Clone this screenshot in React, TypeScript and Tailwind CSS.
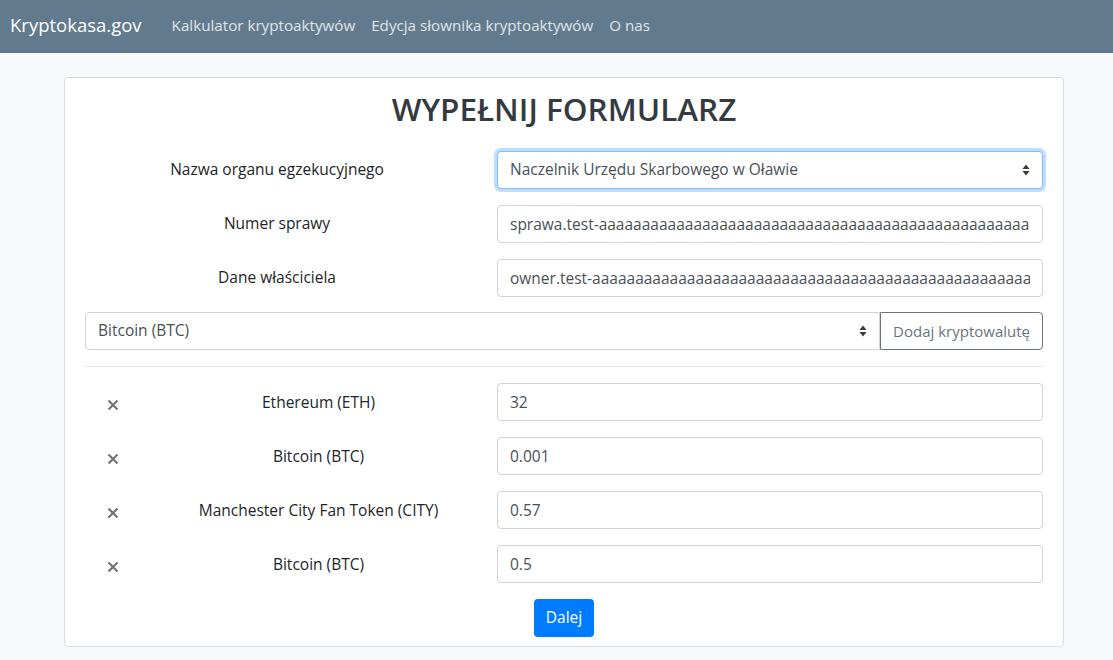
import { ReactNode } from "react";

const font = { fontFamily: '"Open Sans", "Noto Sans", sans-serif' };

function SelectArrows() {
  return (
    <svg viewBox="0 0 8 12" className="h-[12px] w-[8px] fill-[#343a40]">
      <path d="M4 0.5 L7.5 5 H0.5 Z" />
      <path d="M4 11.5 L7.5 7 H0.5 Z" />
    </svg>
  );
}

function RemoveIcon() {
  return (
    <svg viewBox="0 0 12 12" className="size-[12px] stroke-[#757575]" strokeWidth="2.2">
      <path d="M1.5 1.5 L10.5 10.5 M10.5 1.5 L1.5 10.5" />
    </svg>
  );
}

function Field({ label, children }: { label: string; children: ReactNode }) {
  return (
    <div className="flex items-center">
      <label className="w-[412px] pr-[28px] text-center text-[15.5px] text-[#212529]">
        {label}
      </label>
      <div className="flex-1">{children}</div>
    </div>
  );
}

const inputCls =
  "h-[38px] w-full rounded-[4px] border border-[#ced4da] bg-white px-[12px] text-[15.5px] text-[#495057] outline-none";

const items = [
  { name: "Ethereum (ETH)", value: "32" },
  { name: "Bitcoin (BTC)", value: "0.001" },
  { name: "Manchester City Fan Token (CITY)", value: "0.57" },
  { name: "Bitcoin (BTC)", value: "0.5" },
];

export default function App() {
  return (
    <div className="min-h-[660px] bg-[#f8f9fa]" style={font}>
      <nav className="flex h-[53px] items-center bg-[#617a8d] pb-[3px] pl-[10px]">
        <span className="mr-[30px] text-[18.5px] text-white">Kryptokasa.gov</span>
        <ul className="flex gap-[16px] text-[15.2px] text-white/80">
          <li>Kalkulator kryptoaktywów</li>
          <li>Edycja słownika kryptoaktywów</li>
          <li>O nas</li>
        </ul>
      </nav>

      <main className="pl-[64px] pt-[24px]">
        <div className="w-[1000px] rounded-[4px] border border-[#dcdcdc] bg-white px-[20px] pb-[9px] pt-[10px]">
          <h1 className="text-center text-[31.5px] font-semibold leading-[42px] text-[#343a40]">
            WYPEŁNIJ FORMULARZ
          </h1>

          <div className="mt-[21px] flex flex-col gap-[16px]">
            <Field label="Nazwa organu egzekucyjnego">
              <div className="flex h-[38px] items-center justify-between rounded-[4px] border border-[#80bdff] bg-white px-[12px] text-[15.5px] text-[#495057] shadow-[0_0_0_3px_rgba(0,123,255,0.25)]">
                <span>Naczelnik Urzędu Skarbowego w Oławie</span>
                <SelectArrows />
              </div>
            </Field>
            <Field label="Numer sprawy">
              <input
                readOnly
                className={inputCls}
                style={font}
                value={"sprawa.test-" + "a".repeat(80)}
              />
            </Field>
            <Field label="Dane właściciela">
              <input
                readOnly
                className={inputCls}
                style={font}
                value={"owner.test-" + "a".repeat(80)}
              />
            </Field>

            <div className="-mt-[1px] flex">
              <div className="flex h-[38px] flex-1 items-center justify-between rounded-l-[4px] border border-[#ced4da] bg-white px-[12px] text-[15.5px] text-[#495057]">
                <span>Bitcoin (BTC)</span>
                <SelectArrows />
              </div>
              <button className="h-[38px] rounded-r-[4px] border border-[#6c757d] px-[12px] text-[15px] text-[#6c757d]">
                Dodaj kryptowalutę
              </button>
            </div>
          </div>

          <hr className="mb-[16px] mt-[16px] border-[#e5e5e5]" />

          <div className="flex flex-col gap-[16px]">
            {items.map((it, i) => (
              <div key={i} className="flex items-center">
                <div className="flex w-[55px] justify-center pt-[6px]">
                  <RemoveIcon />
                </div>
                <div className="flex-1 pt-[2px] text-center text-[15.5px] text-[#212529]">
                  {it.name}
                </div>
                <input readOnly className={`${inputCls} !w-[546px]`} style={font} value={it.value} />
              </div>
            ))}
          </div>

          <div className="mt-[16px] flex justify-center">
            <button className="h-[38px] rounded-[4px] bg-[#007bff] px-[12px] text-[15.5px] text-white">
              Dalej
            </button>
          </div>
        </div>
      </main>
    </div>
  );
}
